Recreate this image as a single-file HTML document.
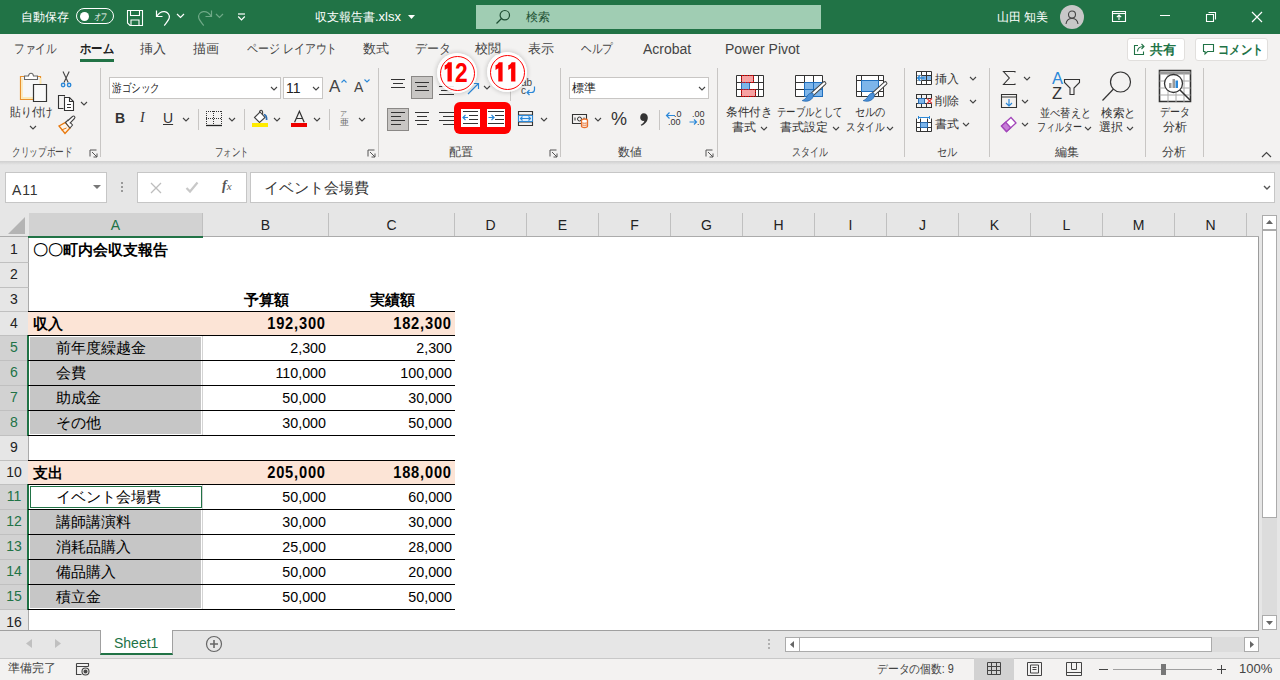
<!DOCTYPE html>
<html lang="ja"><head><meta charset="utf-8">
<style>
*{box-sizing:border-box}
html,body{margin:0;padding:0}
body{width:1280px;height:680px;overflow:hidden;position:relative;background:#f3f2f1;font-family:"Liberation Sans",sans-serif;color:#262626}
.a{position:absolute;white-space:nowrap}
svg{position:absolute;overflow:visible}
#title{left:0;top:0;width:1280px;height:34px;background:#217346}
.wt{color:#fff;font-size:12px;line-height:14px}
.tab{font-size:13px;line-height:16px;color:#444;top:41px}
.gl{font-size:12px;line-height:14px;color:#444;top:145px}
.bt{font-size:12px;line-height:15px;color:#333;text-align:center}
.sep{position:absolute;width:1px;background:#c8c6c4}
.cell{position:absolute;font-size:14.67px;line-height:16px;color:#000}
.rh{position:absolute;left:0;width:28px;background:#e6e6e6;border-bottom:1px solid #c8c8c8;text-align:center;font-size:14px;color:#222}
.ch{position:absolute;top:213px;height:24px;background:#e6e6e6;border-right:1px solid #c8c8c8;border-bottom:1px solid #aaa;text-align:center;font-size:14px;line-height:23px;color:#222}
</style></head><body>
<!-- TITLE BAR -->
<div id="title" class="a"></div>
<div class="a wt" style="left:21px;top:10px;font-size:12px">自動保存</div>
<div class="a" style="left:76px;top:8px;width:38px;height:16px;border:1.3px solid #fff;border-radius:8px"></div>
<div class="a" style="left:79.5px;top:11.5px;width:9px;height:9px;border-radius:50%;background:#fff"></div>
<div class="a wt" style="left:95px;top:10px;font-size:10px;transform:scaleX(.65) skewX(-12deg);transform-origin:0 0">オフ</div>
<svg style="left:126px;top:9px" width="18" height="18" viewBox="0 0 18 18" fill="none" stroke="#fff" stroke-width="1.1"><path d="M1.5 1.5h15v15h-12.5l-2.5-2.5z"/><path d="M4.5 1.5v5h9v-5"/><path d="M5 16.5v-5.5h8v5.5"/></svg>
<svg style="left:155px;top:9px" width="18" height="18" viewBox="0 0 18 18" fill="none" stroke="#fff" stroke-width="1.2"><path d="M1.5 1.5v6h6"/><path d="M1.8 7.2c2-3 5-5 8-4.5c3 .5 5 3 4.5 6c-.3 2-2 4-5 8"/></svg>
<svg style="left:176px;top:13px" width="9" height="6" viewBox="0 0 9 6" fill="none" stroke="#fff" stroke-width="1.2"><path d="M1 1l3.5 3.5l3.5-3.5"/></svg>
<svg style="left:195px;top:9px" width="18" height="18" viewBox="0 0 18 18" fill="none" stroke="#6fa987" stroke-width="1.2"><path d="M16.5 1.5v6h-6"/><path d="M16.2 7.2c-2-3-5-5-8-4.5c-3 .5-5 3-4.5 6c.3 2 2 4 5 8"/></svg>
<svg style="left:215px;top:13px" width="9" height="6" viewBox="0 0 9 6" fill="none" stroke="#6fa987" stroke-width="1.2"><path d="M1 1l3.5 3.5l3.5-3.5"/></svg>
<svg style="left:237px;top:13px" width="9" height="8" viewBox="0 0 9 8" fill="none" stroke="#fff" stroke-width="1.2"><path d="M1 1h7"/><path d="M1.2 3.5l3.3 3.3l3.3-3.3"/></svg>
<div class="a wt" style="left:315px;top:10px;font-size:12px;">収支報告書<span style="font-size:13px">.xlsx</span></div>
<svg style="left:408px;top:15px" width="7" height="4" viewBox="0 0 7 4"><path d="M0 0h7l-3.5 4z" fill="#fff"/></svg>
<div class="a" style="left:476px;top:5px;width:345px;height:24px;background:#a0cdb3"></div>
<svg style="left:495px;top:9px" width="16" height="16" viewBox="0 0 16 16" fill="none" stroke="#1e4d32" stroke-width="1.2"><circle cx="9.8" cy="6.2" r="4.7"/><path d="M6.5 9.5l-5 5"/></svg>
<div class="a" style="left:526px;top:10px;font-size:12px;line-height:14px;color:#1e5234">検索</div>
<div class="a wt" style="left:997px;top:10px;font-size:12px">山田 知美</div>
<div class="a" style="left:1060px;top:5px;width:24px;height:24px;border-radius:50%;background:#c8c8c8"></div>
<svg style="left:1063px;top:8px" width="18" height="18" viewBox="0 0 18 18" fill="none" stroke="#444" stroke-width="1.1"><circle cx="9" cy="6.5" r="3.5"/><path d="M3 16c.5-3.5 3-5.5 6-5.5s5.5 2 6 5.5"/></svg>
<svg style="left:1111px;top:10px" width="16" height="13" viewBox="0 0 16 13" fill="none" stroke="#fff" stroke-width="1.1"><path d="M1.5 1.5h13v10h-13z"/><path d="M1.5 3.5h13"/><path d="M8 10v-5M5.8 7.2l2.2-2.2l2.2 2.2"/></svg>
<svg style="left:1159px;top:15px" width="12" height="2" viewBox="0 0 12 2"><path d="M1 .5h10" stroke="#fff" stroke-width="1"/></svg>
<svg style="left:1205px;top:11px" width="12" height="12" viewBox="0 0 12 12" fill="none" stroke="#fff" stroke-width="1.1"><path d="M1.5 3.5h7v7h-7z"/><path d="M3.5 1.5h7v7"/></svg>
<svg style="left:1251px;top:11px" width="12" height="12" viewBox="0 0 12 12" fill="none" stroke="#fff" stroke-width="1.2"><path d="M1 1l10 10M11 1l-10 10"/></svg>
<!-- TABS -->
<div class="a tab" style="left:14px;transform:scaleX(.82);transform-origin:0 0">ファイル</div>
<div class="a tab" style="left:80px;color:#222;font-weight:bold;transform:scaleX(.87);transform-origin:0 0">ホーム</div>
<div class="a" style="left:80px;top:59px;width:34px;height:3px;background:#217346"></div>
<div class="a tab" style="left:140px">挿入</div>
<div class="a tab" style="left:193px">描画</div>
<div class="a tab" style="left:247px;transform:scaleX(.84);transform-origin:0 0">ページ レイアウト</div>
<div class="a tab" style="left:363px">数式</div>
<div class="a tab" style="left:415px;transform:scaleX(.92);transform-origin:0 0">データ</div>
<div class="a tab" style="left:475px">校閲</div>
<div class="a tab" style="left:528px">表示</div>
<div class="a tab" style="left:581px;transform:scaleX(.82);transform-origin:0 0">ヘルプ</div>
<div class="a tab" style="left:643px;font-size:14px">Acrobat</div>
<div class="a tab" style="left:725px;font-size:14px">Power Pivot</div>
<div class="a" style="left:1127px;top:38px;width:58px;height:23px;background:#fff;border:1px solid #e1dfdd;border-radius:3px"></div>
<svg style="left:1133px;top:42px" width="13" height="14" viewBox="0 0 13 14" fill="none" stroke="#217346" stroke-width="1.1"><path d="M5 3.5h-3.5v9h9v-3"/><path d="M4.5 9.5c0-3 2-5 6-5M8.5 2l2.5 2.5l-2.5 2.5"/></svg>
<div class="a" style="left:1150px;top:42px;font-size:13px;line-height:15px;font-weight:bold;color:#217346">共有</div>
<div class="a" style="left:1195px;top:38px;width:73px;height:23px;background:#fff;border:1px solid #e1dfdd;border-radius:3px"></div>
<svg style="left:1202px;top:43px" width="13" height="13" viewBox="0 0 13 13" fill="none" stroke="#217346" stroke-width="1.1"><path d="M1.5 1.5h10v7h-6l-2.5 2.5v-2.5h-1.5z"/></svg>
<div class="a" style="left:1218px;top:42px;font-size:13px;line-height:15px;font-weight:bold;color:#217346;transform:scaleX(.87);transform-origin:0 0">コメント</div>
<!-- RIBBON -->
<div class="sep" style="left:100px;top:68px;height:89px"></div>
<div class="sep" style="left:378px;top:68px;height:89px"></div>
<div class="sep" style="left:560px;top:68px;height:89px"></div>
<div class="sep" style="left:717px;top:68px;height:89px"></div>
<div class="sep" style="left:904px;top:68px;height:89px"></div>
<div class="sep" style="left:989px;top:68px;height:89px"></div>
<div class="sep" style="left:1145px;top:68px;height:89px"></div>
<div class="sep" style="left:1203px;top:68px;height:89px"></div>
<!-- clipboard -->
<svg style="left:0;top:0" width="1" height="1"><path d="M20.5 76.5h20v23h-20z" fill="#f7f7f7" stroke="#e8912d" stroke-width="1.2"/><path d="M22 78v20h18.5V78" fill="none" stroke="#fde7a8" stroke-width="1.3"/><path d="M24.5 79.5v-3.5h4c.3-1.8 1.2-2.8 2.5-2.8s2.2 1 2.5 2.8h4v3.5z" fill="#fff" stroke="#666" stroke-width="1.1"/><path d="M33.5 84.5h13v17h-13z" fill="#f9f9f9" stroke="#333" stroke-width="1.2"/></svg>
<div class="a bt" style="left:10px;top:105px;transform:scaleX(.9);transform-origin:0 0">貼り付け</div>
<svg style="left:29px;top:125px" width="8" height="5" viewBox="0 0 8 5" fill="none" stroke="#444" stroke-width="1.1"><path d="M1 1l3 3l3-3"/></svg>
<svg style="left:0;top:0" width="1" height="1" fill="none"><path d="M63 71.5l5.2 11M69.2 71.5l-5.2 11" stroke="#444" stroke-width="1.1"/><circle cx="63.1" cy="85" r="1.7" stroke="#2b88d8" stroke-width="1.4"/><circle cx="69.1" cy="85" r="1.7" stroke="#2b88d8" stroke-width="1.4"/></svg>
<svg style="left:0;top:0" width="1" height="1" fill="none" stroke="#333" stroke-width="1.1"><path d="M64.5 96.5v-1h-6v13h5"/><path d="M64.5 97.5h5l4 4v9h-9z" fill="#fff"/><path d="M69.5 97.5v4h4"/><path d="M67 104.5h4M67 107.5h4" stroke-width="1"/></svg>
<svg style="left:80px;top:101px" width="8" height="5" viewBox="0 0 8 5" fill="none" stroke="#444" stroke-width="1.1"><path d="M1 1l3 3l3-3"/></svg>
<svg style="left:0;top:0" width="1" height="1" fill="none"><path d="M59 126l6.5-3.5l4.5 5.5l-5 5.5z" fill="#fdf3e6" stroke="#e8780d" stroke-width="1.4"/><path d="M61.5 130l5-2" stroke="#e8780d" stroke-width="1"/><path d="M65.5 122.5l2.5-2.5l4.5 5l-2.5 3z" fill="#fff" stroke="#444" stroke-width="1.1"/><path d="M67.5 121l5-4.5c.7-.6 1.6-.6 2.1 0c.5.6.4 1.4-.2 2l-4.6 4.8" fill="#fff" stroke="#444" stroke-width="1.1"/></svg>
<div class="a gl" style="left:12px;transform:scaleX(.72);transform-origin:0 0">クリップボード</div>
<svg style="left:89px;top:149px" width="9" height="9" viewBox="0 0 9 9" fill="none" stroke="#555" stroke-width="1"><path d="M1 7.5v-6.5h6.5"/><path d="M3 3l5 5M8 4.5v3.5h-3.5"/></svg>
<!-- font -->
<div class="a" style="left:109px;top:77px;width:172px;height:22px;background:#fff;border:1px solid #c8c6c4"></div>
<div class="a" style="left:112px;top:81px;font-size:12px;line-height:14px;color:#222;transform:scaleX(.8);transform-origin:0 0">游ゴシック</div>
<svg style="left:270px;top:86px" width="8" height="5" viewBox="0 0 8 5" fill="none" stroke="#444" stroke-width="1.1"><path d="M1 1l3 3l3-3"/></svg>
<div class="a" style="left:283px;top:77px;width:40px;height:22px;background:#fff;border:1px solid #c8c6c4"></div>
<div class="a" style="left:286px;top:80px;font-size:14px;line-height:16px;color:#222">11</div>
<svg style="left:312px;top:86px" width="8" height="5" viewBox="0 0 8 5" fill="none" stroke="#444" stroke-width="1.1"><path d="M1 1l3 3l3-3"/></svg>
<div class="a" style="left:329px;top:78px;font-size:17px;line-height:17px;color:#444">A</div>
<svg style="left:341px;top:79px" width="6" height="4" viewBox="0 0 6 4" fill="none" stroke="#2b88d8" stroke-width="1.1"><path d="M.5 3.5l2.5-2.5l2.5 2.5"/></svg>
<div class="a" style="left:354px;top:80px;font-size:14px;line-height:14px;color:#444">A</div>
<svg style="left:364px;top:79px" width="6" height="4" viewBox="0 0 6 4" fill="none" stroke="#2b88d8" stroke-width="1.1"><path d="M.5 .5l2.5 2.5l2.5-2.5"/></svg>
<div class="a" style="left:115px;top:110px;font-size:14px;line-height:16px;font-weight:bold;color:#333">B</div>
<div class="a" style="left:140px;top:110px;font-size:14px;line-height:16px;font-style:italic;font-family:'Liberation Serif',serif;color:#333">I</div>
<div class="a" style="left:163px;top:110px;font-size:14px;line-height:16px;color:#333;text-decoration:underline">U</div>
<svg style="left:182px;top:117px" width="8" height="5" viewBox="0 0 8 5" fill="none" stroke="#444" stroke-width="1.1"><path d="M1 1l3 3l3-3"/></svg>
<div class="sep" style="left:198px;top:109px;height:21px"></div>
<svg style="left:0;top:0" width="1" height="1" fill="none"><path d="M206 111.5h16M206 118.5h16M206.5 111v14M213.5 111v14M221.5 111v14" stroke="#333" stroke-width="1" stroke-dasharray="1 1"/><path d="M206 125.5h16" stroke="#222" stroke-width="1.3"/></svg>
<svg style="left:228px;top:117px" width="8" height="5" viewBox="0 0 8 5" fill="none" stroke="#444" stroke-width="1.1"><path d="M1 1l3 3l3-3"/></svg>
<div class="sep" style="left:244px;top:109px;height:21px"></div>
<svg style="left:0;top:0" width="1" height="1" fill="none"><path d="M254.5 117.5l5.5-5.5l5 5.5l-5.5 5z" fill="#fff" stroke="#444" stroke-width="1.1"/><path d="M259.5 112.5c0-1.5.8-2.3 1.6-2.3s1.5.8 1.5 2.2v2.6" stroke="#444" stroke-width="1.1"/><path d="M264 114.5c1.8.5 2.8 2.5 2.6 5.5" stroke="#2b6cb0" stroke-width="1.7"/><path d="M252 123h16v4h-16z" fill="#ffeb00"/></svg>
<svg style="left:273px;top:117px" width="8" height="5" viewBox="0 0 8 5" fill="none" stroke="#444" stroke-width="1.1"><path d="M1 1l3 3l3-3"/></svg>
<svg style="left:0;top:0" width="1" height="1" fill="none"><path d="M294.6 122.2L299.4 111.2L304.2 122.2M296.4 118.5h6" stroke="#333" stroke-width="1.2"/></svg>
<div class="a" style="left:291px;top:123px;width:16px;height:4px;background:#e00"></div>
<svg style="left:313px;top:117px" width="8" height="5" viewBox="0 0 8 5" fill="none" stroke="#444" stroke-width="1.1"><path d="M1 1l3 3l3-3"/></svg>
<div class="sep" style="left:329px;top:109px;height:21px"></div>
<div class="a" style="left:340px;top:110px;font-size:7px;line-height:7px;color:#666">ア</div>
<div class="a" style="left:340px;top:118px;font-size:9px;line-height:9px;color:#666">亜</div>
<svg style="left:358px;top:117px" width="8" height="5" viewBox="0 0 8 5" fill="none" stroke="#444" stroke-width="1.1"><path d="M1 1l3 3l3-3"/></svg>
<div class="a gl" style="left:215px;transform:scaleX(.7);transform-origin:0 0">フォント</div>
<svg style="left:367px;top:149px" width="9" height="9" viewBox="0 0 9 9" fill="none" stroke="#555" stroke-width="1"><path d="M1 7.5v-6.5h6.5"/><path d="M3 3l5 5M8 4.5v3.5h-3.5"/></svg>
<!-- alignment -->
<svg style="left:390px;top:78px" width="16" height="11" viewBox="0 0 16 11" stroke="#333" stroke-width="1"><path d="M1 1.5h14M3 5.5h10M1 9.5h14"/></svg>
<div class="a" style="left:411px;top:76px;width:22px;height:23px;background:#c8c6c4;border:1px solid #8a8886"></div>
<svg style="left:414px;top:81px" width="16" height="11" viewBox="0 0 16 11" stroke="#333" stroke-width="1"><path d="M1 1.5h14M3 5.5h10M1 9.5h14"/></svg>
<svg style="left:438px;top:84px" width="17" height="11" viewBox="0 0 17 11" stroke="#333" stroke-width="1"><path d="M1 2.5h15M3 6.5h11M1 10.5h15"/></svg>
<svg style="left:467px;top:82px" width="13" height="13" viewBox="0 0 13 13" fill="none" stroke="#2b88d8" stroke-width="1.2"><path d="M1 12l10.5-10.5M6 1.5h5.5v5.5"/></svg>
<svg style="left:483px;top:85px" width="8" height="5" viewBox="0 0 8 5" fill="none" stroke="#444" stroke-width="1.1"><path d="M1 1l3 3l3-3"/></svg>
<div class="sep" style="left:510px;top:71px;height:30px"></div>
<div class="a" style="left:521px;top:79px;font-size:10px;line-height:8px;color:#444">ab</div>
<div class="a" style="left:521px;top:87px;font-size:10px;line-height:8px;color:#444">c</div>
<svg style="left:526px;top:86px" width="10" height="9" viewBox="0 0 10 9" fill="none" stroke="#2b88d8" stroke-width="1.2"><path d="M8.5 .5v3c0 2-1 3-3 3h-4M3.5 4l-2.5 2.5l2.5 2.5"/></svg>
<div class="a" style="left:387px;top:108px;width:22px;height:23px;background:#c8c6c4;border:1px solid #8a8886"></div>
<svg style="left:390px;top:112px" width="16" height="15" viewBox="0 0 16 15" stroke="#333" stroke-width="1"><path d="M1 .5h14M1 4.5h10M1 8.5h14M1 12.5h10"/></svg>
<svg style="left:414px;top:112px" width="16" height="15" viewBox="0 0 16 15" stroke="#333" stroke-width="1"><path d="M1 .5h14M3 4.5h10M1 8.5h14M3 12.5h10"/></svg>
<svg style="left:438px;top:112px" width="17" height="15" viewBox="0 0 17 15" stroke="#333" stroke-width="1"><path d="M1 .5h15M5 4.5h11M1 8.5h15M5 12.5h11"/></svg>
<div class="a" style="left:454px;top:102px;width:57px;height:32px;background:#f00;border-radius:6px"></div>
<div class="a" style="left:461px;top:109px;width:19px;height:18px;background:#fff"></div>
<div class="a" style="left:487px;top:109px;width:18px;height:18px;background:#fff"></div>
<svg style="left:461px;top:109px" width="19" height="18" viewBox="0 0 19 18" fill="none"><path d="M2 2.5h15M8 6.5h9M8 10.5h9M2 14.5h15" stroke="#333" stroke-width="1"/><path d="M7 8.5h-5M4.5 6l-2.5 2.5l2.5 2.5" stroke="#2b88d8" stroke-width="1.2"/></svg>
<svg style="left:487px;top:109px" width="18" height="18" viewBox="0 0 18 18" fill="none"><path d="M1 2.5h16M8 6.5h9M8 10.5h9M1 14.5h16" stroke="#333" stroke-width="1"/><path d="M1.5 8.5h5M4.5 6l2.5 2.5l-2.5 2.5" stroke="#2b88d8" stroke-width="1.2"/></svg>
<svg style="left:517px;top:110px" width="17" height="17" viewBox="0 0 17 17" fill="none"><path d="M1.5 1.5h14v14h-14z" stroke="#333" stroke-width="1.1"/><path d="M1.5 5h14M1.5 12h14" stroke="#333" stroke-width="1"/><path d="M1.5 5.5h14v6h-14z" fill="#dbeeff" stroke="#2b88d8" stroke-width="1"/><path d="M3.5 8.5h10M5.5 6.5l-2 2l2 2M11.5 6.5l2 2l-2 2" stroke="#2b88d8" stroke-width="1.1"/></svg>
<svg style="left:540px;top:117px" width="8" height="5" viewBox="0 0 8 5" fill="none" stroke="#444" stroke-width="1.1"><path d="M1 1l3 3l3-3"/></svg>
<div class="a gl" style="left:449px">配置</div>
<svg style="left:549px;top:149px" width="9" height="9" viewBox="0 0 9 9" fill="none" stroke="#555" stroke-width="1"><path d="M1 7.5v-6.5h6.5"/><path d="M3 3l5 5M8 4.5v3.5h-3.5"/></svg>
<!-- number -->
<div class="a" style="left:569px;top:77px;width:140px;height:22px;background:#fff;border:1px solid #c8c6c4"></div>
<div class="a" style="left:572px;top:81px;font-size:12px;line-height:14px;color:#222">標準</div>
<svg style="left:698px;top:86px" width="8" height="5" viewBox="0 0 8 5" fill="none" stroke="#444" stroke-width="1.1"><path d="M1 1l3 3l3-3"/></svg>
<svg style="left:571px;top:112px" width="19" height="16" viewBox="0 0 19 16" fill="none"><path d="M1.5 2.5h14v9h-14z" stroke="#333" stroke-width="1.1"/><path d="M4 5.5v3M13 5.5v3" stroke="#333" stroke-width="1"/><circle cx="8.5" cy="7" r="2" stroke="#333" stroke-width="1"/><path d="M10.5 8.5c0-1 1.5-1.5 3-1.5s3 .5 3 1.5v5.5c0 1-1.5 1.5-3 1.5s-3-.5-3-1.5z" fill="#fff" stroke="#e8712d" stroke-width="1.3"/><path d="M10.5 10.5c.5 1 5.5 1 6 0M10.5 12.5c.5 1 5.5 1 6 0" stroke="#e8712d" stroke-width="1"/></svg>
<svg style="left:594px;top:117px" width="8" height="5" viewBox="0 0 8 5" fill="none" stroke="#444" stroke-width="1.1"><path d="M1 1l3 3l3-3"/></svg>
<div class="a" style="left:611px;top:109px;font-size:18px;line-height:20px;color:#333">%</div>
<svg style="left:639px;top:113px" width="9" height="13" viewBox="0 0 9 13"><path d="M4.6 .3c2.5 0 4.2 1.8 4.2 4.3c0 3.8-2.8 7-6.5 8.2l-.6-1c2-1 3.3-2.3 3.7-4c-.3.1-.6.1-.9.1c-1.9 0-3.3-1.4-3.3-3.5s1.4-4.1 3.4-4.1z" fill="#333"/></svg>
<div class="sep" style="left:659px;top:110px;height:20px"></div>
<svg style="left:665px;top:111px" width="18" height="16" viewBox="0 0 18 16" fill="none"><path d="M10 4.5h-8.5M4.5 1.5l-3 3l3 3" stroke="#2b88d8" stroke-width="1.2"/></svg>
<div class="a" style="left:674px;top:110px;font-size:9px;line-height:9px;color:#333">.0</div>
<div class="a" style="left:668px;top:118px;font-size:9px;line-height:9px;color:#333">.00</div>
<div class="a" style="left:692px;top:110px;font-size:9px;line-height:9px;color:#333">.00</div>
<div class="a" style="left:697px;top:118px;font-size:9px;line-height:9px;color:#333">.0</div>
<svg style="left:689px;top:118px" width="10" height="8" viewBox="0 0 10 8" fill="none"><path d="M.5 4h7M5 1.5l2.5 2.5l-2.5 2.5" stroke="#2b88d8" stroke-width="1.2"/></svg>
<div class="a gl" style="left:618px">数値</div>
<svg style="left:705px;top:149px" width="9" height="9" viewBox="0 0 9 9" fill="none" stroke="#555" stroke-width="1"><path d="M1 7.5v-6.5h6.5"/><path d="M3 3l5 5M8 4.5v3.5h-3.5"/></svg>
<!-- styles -->
<svg style="left:0;top:0" width="1" height="1" fill="none"><path d="M736.5 75.5h27v21h-27z" fill="#fff"/><path d="M741.5 75.5h12v7h-12zM741.5 89.5h14v7h-14z" fill="#f7a1a1"/><path d="M741.5 82.5h8v7h-8z" fill="#7db5ea"/><path d="M736.5 75.5h27v21h-27zM736.5 82.5h27M736.5 89.5h27M741.5 75.5v21M753.5 75.5v7M755.5 89.5v7M758.5 75.5v21" stroke="#333" stroke-width="1"/><path d="M741.5 82.5h8v7h-8z" stroke="#2b6cb0" stroke-width="1"/><path d="M741.5 75.5h12v7h-12zM741.5 89.5h14v7h-14z" stroke="#e00" stroke-width="1" stroke-dasharray="1.5 1"/></svg>
<div class="a bt" style="left:726px;top:105px;transform:scaleX(.97);transform-origin:0 0">条件付き</div>
<div class="a bt" style="left:732px;top:120px">書式</div>
<svg style="left:760px;top:126px" width="8" height="5" viewBox="0 0 8 5" fill="none" stroke="#444" stroke-width="1.1"><path d="M1 1l3 3l3-3"/></svg>
<svg style="left:0;top:0" width="1" height="1" fill="none"><path d="M795.5 75.5h27v21h-27z" fill="#fff"/><path d="M804.5 82.5h18v14h-18z" fill="#7db5ea"/><path d="M795.5 75.5h27v21h-27zM795.5 82.5h27M795.5 89.5h27M804.5 75.5v21M813.5 75.5v21" stroke="#333" stroke-width="1"/><path d="M804.5 96.5v-14h18v14zM804.5 89.5h18M813.5 82.5v14" stroke="#1f6fbf" stroke-width="1"/><path d="M824.3 83.3l-12.1 11.1" stroke="#444" stroke-width="4.2" stroke-linecap="round"/><path d="M824.3 83.3l-12.1 11.1" stroke="#fff" stroke-width="2.2" stroke-linecap="round"/><path d="M813 93.2c-2.8-.6-5 .8-6.3 3.6c-.8 1.6-2.2 3-4.5 3.8c2.8 1.2 6.5.8 9-1.2c1.8-1.5 2.6-3.6 1.8-6.2z" fill="#4a90d9" stroke="#2b6cb0" stroke-width=".8"/></svg>
<div class="a bt" style="left:777px;top:105px;transform:scaleX(.78);transform-origin:0 0">テーブルとして</div>
<div class="a bt" style="left:780px;top:120px">書式設定</div>
<svg style="left:832px;top:126px" width="8" height="5" viewBox="0 0 8 5" fill="none" stroke="#444" stroke-width="1.1"><path d="M1 1l3 3l3-3"/></svg>
<svg style="left:0;top:0" width="1" height="1" fill="none"><path d="M856.5 75.5h27v21h-27z" fill="#fff"/><path d="M856.5 80.5h27M856.5 91.5h27M861.5 75.5v21M878.5 75.5v21" stroke="#333" stroke-width="1"/><path d="M861.5 80.5h17v11h-17z" fill="#7db5ea" stroke="#1f6fbf" stroke-width="1"/><path d="M856.5 75.5h27v21h-27z" stroke="#333" stroke-width="1"/><path d="M885.3 83.3l-12.1 11.1" stroke="#444" stroke-width="4.2" stroke-linecap="round"/><path d="M885.3 83.3l-12.1 11.1" stroke="#fff" stroke-width="2.2" stroke-linecap="round"/><path d="M874 93.2c-2.8-.6-5 .8-6.3 3.6c-.8 1.6-2.2 3-4.5 3.8c2.8 1.2 6.5.8 9-1.2c1.8-1.5 2.6-3.6 1.8-6.2z" fill="#4a90d9" stroke="#2b6cb0" stroke-width=".8"/></svg>
<div class="a bt" style="left:855px;top:105px;transform:scaleX(.85);transform-origin:0 0">セルの</div>
<div class="a bt" style="left:846px;top:120px;transform:scaleX(.8);transform-origin:0 0">スタイル</div>
<svg style="left:886px;top:126px" width="8" height="5" viewBox="0 0 8 5" fill="none" stroke="#444" stroke-width="1.1"><path d="M1 1l3 3l3-3"/></svg>
<div class="a gl" style="left:792px;transform:scaleX(.75);transform-origin:0 0">スタイル</div>
<!-- cells -->
<svg style="left:0;top:0" width="1" height="1" fill="none"><path d="M916 71h16v14h-16z" fill="#fff"/><path d="M922 76h10v4h-10z" fill="#7db5ea"/><path d="M916.5 71.5h15v13h-15zM916.5 75.5h15M916.5 80.5h15M921.5 71.5v13M926.5 71.5v13" stroke="#333" stroke-width="1"/><path d="M916.5 75.5h5v5h-5z" fill="#fff"/><path d="M924.5 78h-7M920.3 75.3l-2.7 2.7l2.7 2.7" stroke="#2b88d8" stroke-width="1.3"/><path d="M916.5 71.5v13" stroke="#333" stroke-width="1"/></svg>
<div class="a bt" style="left:935px;top:72px">挿入</div>
<svg style="left:969px;top:76px" width="8" height="5" viewBox="0 0 8 5" fill="none" stroke="#444" stroke-width="1.1"><path d="M1 1l3 3l3-3"/></svg>
<svg style="left:0;top:0" width="1" height="1" fill="none"><path d="M916 94.5h16M916 98.5h16M916 103.5h16M916 107.5h16M916.5 94.5v3.5M916.5 104v3.5M921.5 94.5v13M926.5 94.5v4M926.5 103v4.5M931.5 94.5v13" stroke="#333" stroke-width="1"/><path d="M926 99h6v4h-6z" fill="#f3f2f1"/><path d="M918.5 98.5h6v5h-6z" fill="#7db5ea" stroke="#2b6cb0" stroke-width="1"/><path d="M927 98.5l5 5M932 98.5l-5 5" stroke="#e44" stroke-width="1.1"/></svg>
<div class="a bt" style="left:935px;top:94px">削除</div>
<svg style="left:969px;top:99px" width="8" height="5" viewBox="0 0 8 5" fill="none" stroke="#444" stroke-width="1.1"><path d="M1 1l3 3l3-3"/></svg>
<svg style="left:0;top:0" width="1" height="1" fill="none"><path d="M916 118h16v14h-16z" fill="#fff"/><path d="M920.5 122.5h7v5h-7z" fill="#7db5ea"/><path d="M916.5 118.5v13h15v-13M916.5 122.5h15M916.5 127.5h15M920.5 118.5v13M927.5 118.5v13" stroke="#333" stroke-width="1"/><path d="M920.5 122.5h7v5h-7z" stroke="#2b6cb0" stroke-width="1"/><path d="M919 117.5h10M918.5 116v3M929.5 116v3" stroke="#2b88d8" stroke-width="1"/></svg>
<div class="a bt" style="left:935px;top:117px">書式</div>
<svg style="left:962px;top:122px" width="8" height="5" viewBox="0 0 8 5" fill="none" stroke="#444" stroke-width="1.1"><path d="M1 1l3 3l3-3"/></svg>
<div class="a gl" style="left:937px;transform:scaleX(.85);transform-origin:0 0">セル</div>
<!-- editing -->
<svg style="left:1002px;top:70px" width="16" height="16" viewBox="0 0 16 16" fill="none" stroke="#333" stroke-width="1.1"><path d="M13 2.5v-1h-11.5l5.8 6.5l-5.8 6.5h11.5v-1"/></svg>
<svg style="left:1023px;top:76px" width="8" height="5" viewBox="0 0 8 5" fill="none" stroke="#444" stroke-width="1.1"><path d="M1 1l3 3l3-3"/></svg>
<svg style="left:1000px;top:93px" width="18" height="16" viewBox="0 0 18 16" fill="none"><path d="M1.5 1.5h15v13h-15zM1.5 4h15" stroke="#333" stroke-width="1.1"/><path d="M9 6v7M6 10l3 3l3-3" stroke="#2b88d8" stroke-width="1.2"/></svg>
<svg style="left:1021px;top:99px" width="8" height="5" viewBox="0 0 8 5" fill="none" stroke="#444" stroke-width="1.1"><path d="M1 1l3 3l3-3"/></svg>
<svg style="left:1000px;top:115px" width="18" height="18" viewBox="0 0 18 18" fill="none"><path d="M1.5 11l9.5-8.5l5 5.5l-9.5 8.5z" fill="#fff" stroke="#a347ba" stroke-width="1.3"/><path d="M1.5 11l4.2-3.8l5 5.5l-4.2 3.8z" fill="#c77ed8" stroke="#a347ba" stroke-width="1.3"/></svg>
<svg style="left:1021px;top:122px" width="8" height="5" viewBox="0 0 8 5" fill="none" stroke="#444" stroke-width="1.1"><path d="M1 1l3 3l3-3"/></svg>
<div class="a" style="left:1052px;top:70px;font-size:16.5px;line-height:16px;color:#2b88d8">A</div>
<div class="a" style="left:1052px;top:85px;font-size:16.5px;line-height:16px;color:#333">Z</div>
<svg style="left:0;top:0" width="1" height="1" fill="none" stroke="#333" stroke-width="1.1"><path d="M1064.5 79.5h15v3l-5.5 5.5v6.5h-4v-6.5l-5.5-5.5z"/></svg>
<div class="a bt" style="left:1040px;top:106px;transform:scaleX(.85);transform-origin:0 0">並べ替えと</div>
<div class="a bt" style="left:1037px;top:120px;transform:scaleX(.75);transform-origin:0 0">フィルター</div>
<svg style="left:1084px;top:126px" width="8" height="5" viewBox="0 0 8 5" fill="none" stroke="#444" stroke-width="1.1"><path d="M1 1l3 3l3-3"/></svg>
<svg style="left:1101px;top:71px" width="31" height="31" viewBox="0 0 31 31" fill="none" stroke="#333" stroke-width="1.2"><circle cx="19.5" cy="11" r="10"/><path d="M12.5 18l-11 11.5"/></svg>
<div class="a bt" style="left:1101px;top:106px;transform:scaleX(.97);transform-origin:0 0">検索と</div>
<div class="a bt" style="left:1099px;top:120px">選択</div>
<svg style="left:1126px;top:126px" width="8" height="5" viewBox="0 0 8 5" fill="none" stroke="#444" stroke-width="1.1"><path d="M1 1l3 3l3-3"/></svg>
<div class="a gl" style="left:1055px">編集</div>
<!-- analysis -->
<svg style="left:1158px;top:69px" width="34" height="34" viewBox="0 0 34 34" fill="none"><path d="M1.5 1.5h31v31h-31z" fill="#fff" stroke="#333" stroke-width="1.6"/><path d="M1.5 4h31" stroke="#999" stroke-width="3"/><path d="M1.5 12h31M1.5 19h31M1.5 26h31M10 4v29M18 4v29M26 4v29" stroke="#aaa" stroke-width="1"/><circle cx="15.5" cy="14.5" r="9" fill="#fff" stroke="#333" stroke-width="1.3"/><path d="M22 21l10 10" stroke="#333" stroke-width="1.5"/><path d="M11 14h2.5v5h-2.5zM14.5 10h2.5v9h-2.5z" fill="#999"/><path d="M17.5 11.5h2.5v7.5h-2.5z" fill="#2b88d8"/></svg>
<div class="a bt" style="left:1160px;top:105px;transform:scaleX(.83);transform-origin:0 0">データ</div>
<div class="a bt" style="left:1163px;top:120px">分析</div>
<div class="a gl" style="left:1162px">分析</div>
<svg style="left:1261px;top:151px" width="11" height="7" viewBox="0 0 11 7" fill="none" stroke="#444" stroke-width="1.2"><path d="M1 6l4.5-4.5l4.5 4.5"/></svg>
<!-- callouts -->
<div class="a" style="left:437px;top:53px;width:40px;height:40px;border-radius:50%;background:rgba(255,255,255,.9);box-shadow:0 0 4px 1px rgba(0,0,0,.16)"></div>
<div class="a" style="left:439.5px;top:55.5px;width:35px;height:35px;border-radius:50%;border:1px solid #f00"></div>
<svg style="left:0;top:0" width="1" height="1"><path d="M451.8 62.2V81.6H447.5V68.2L444.7 70V65.3C446.5 64.4 447.5 63.4 448.1 62.2Z" fill="#f00"/></svg><div class="a" style="left:455px;top:58px;font-size:28.5px;line-height:28px;font-weight:bold;color:#f00;transform:scaleX(.8);transform-origin:0 0">2</div>
<div class="a" style="left:487px;top:52px;width:40px;height:40px;border-radius:50%;background:rgba(255,255,255,.9);box-shadow:0 0 4px 1px rgba(0,0,0,.16)"></div>
<div class="a" style="left:489.5px;top:54.5px;width:35px;height:35px;border-radius:50%;border:1px solid #f00"></div>
<svg style="left:0;top:0" width="1" height="1"><path d="M502.6 62.2V81.6H498.3V68.2L495.5 70V65.3C497.3 64.4 498.3 63.4 498.90000000000003 62.2ZM515.4 62.2V81.6H511.1V68.2L508.3 70V65.3C510.1 64.4 511.1 63.4 511.70000000000005 62.2Z" fill="#f00"/></svg>

<!-- FORMULA -->
<div class="a" style="left:0;top:161px;width:1280px;height:469px;background:#e6e6e6"></div>
<div class="a" style="left:0;top:161px;width:1280px;height:4px;background:linear-gradient(#cfcfcf,#e6e6e6)"></div>
<div class="a" style="left:5px;top:172px;width:102px;height:31px;background:#fff;border:1px solid #c6c6c6"></div>
<div class="a" style="left:12px;top:181.5px;font-size:14px;line-height:16px;color:#333;letter-spacing:.8px">A11</div>
<svg style="left:93px;top:185px" width="8" height="4" viewBox="0 0 8 4"><path d="M0 0h8l-4 4z" fill="#777"/></svg>
<svg style="left:121px;top:182px" width="2" height="11" viewBox="0 0 2 11" fill="#999"><rect x="0" y="0" width="2" height="2"/><rect x="0" y="4" width="2" height="2"/><rect x="0" y="8" width="2" height="2"/></svg>
<div class="a" style="left:137px;top:172px;width:110px;height:31px;background:#fff;border:1px solid #c6c6c6"></div>
<svg style="left:150px;top:182px" width="12" height="12" viewBox="0 0 12 12" fill="none" stroke="#bdbdbd" stroke-width="1.3"><path d="M1 1l10 10M11 1l-10 10"/></svg>
<svg style="left:185px;top:181px" width="14" height="12" viewBox="0 0 14 12" fill="none" stroke="#c8c8c8" stroke-width="2.2"><path d="M1.5 7l3.5 3.5l7.5-9"/></svg>
<div class="a" style="left:222px;top:178px;font-size:14px;line-height:16px;font-style:italic;font-weight:bold;font-family:'Liberation Serif',serif;color:#555">f<span style="font-size:11px;font-weight:normal">x</span></div>
<div class="a" style="left:250px;top:172px;width:1025px;height:31px;background:#fff;border:1px solid #c6c6c6"></div>
<div class="a" style="left:264px;top:180px;font-size:14.67px;line-height:16px;color:#333">イベント会場費</div>
<svg style="left:1263px;top:185px" width="8" height="5" viewBox="0 0 8 5" fill="none" stroke="#555" stroke-width="1.4"><path d="M1 1l3 3l3-3"/></svg>
<!-- SHEET -->
<div class="a" style="left:28px;top:237px;width:1231px;height:393px;background:#fff;border-right:1px solid #9b9b9b"></div>
<div class="a" style="left:0;top:213px;width:1259px;height:24px;background:#e6e6e6;border-bottom:1px solid #ababab"></div>
<svg style="left:8px;top:217px" width="17" height="17" viewBox="0 0 17 17"><path d="M17 0v17h-17z" fill="#b4b4b4"/></svg>
<div class="a" style="left:29px;top:213px;width:174px;height:23px;background:#d2d2d2;border-right:1px solid #c0c0c0;text-align:center;font-size:14px;line-height:24px;color:#217346">A</div>
<div class="a" style="left:203px;top:213px;width:126px;height:23px;background:#e6e6e6;border-right:1px solid #c0c0c0;text-align:center;font-size:14px;line-height:24px;color:#222">B</div>
<div class="a" style="left:329px;top:213px;width:126px;height:23px;background:#e6e6e6;border-right:1px solid #c0c0c0;text-align:center;font-size:14px;line-height:24px;color:#222">C</div>
<div class="a" style="left:455px;top:213px;width:72px;height:23px;background:#e6e6e6;border-right:1px solid #c0c0c0;text-align:center;font-size:14px;line-height:24px;color:#222">D</div>
<div class="a" style="left:527px;top:213px;width:72px;height:23px;background:#e6e6e6;border-right:1px solid #c0c0c0;text-align:center;font-size:14px;line-height:24px;color:#222">E</div>
<div class="a" style="left:599px;top:213px;width:72px;height:23px;background:#e6e6e6;border-right:1px solid #c0c0c0;text-align:center;font-size:14px;line-height:24px;color:#222">F</div>
<div class="a" style="left:671px;top:213px;width:72px;height:23px;background:#e6e6e6;border-right:1px solid #c0c0c0;text-align:center;font-size:14px;line-height:24px;color:#222">G</div>
<div class="a" style="left:743px;top:213px;width:72px;height:23px;background:#e6e6e6;border-right:1px solid #c0c0c0;text-align:center;font-size:14px;line-height:24px;color:#222">H</div>
<div class="a" style="left:815px;top:213px;width:72px;height:23px;background:#e6e6e6;border-right:1px solid #c0c0c0;text-align:center;font-size:14px;line-height:24px;color:#222">I</div>
<div class="a" style="left:887px;top:213px;width:72px;height:23px;background:#e6e6e6;border-right:1px solid #c0c0c0;text-align:center;font-size:14px;line-height:24px;color:#222">J</div>
<div class="a" style="left:959px;top:213px;width:72px;height:23px;background:#e6e6e6;border-right:1px solid #c0c0c0;text-align:center;font-size:14px;line-height:24px;color:#222">K</div>
<div class="a" style="left:1031px;top:213px;width:72px;height:23px;background:#e6e6e6;border-right:1px solid #c0c0c0;text-align:center;font-size:14px;line-height:24px;color:#222">L</div>
<div class="a" style="left:1103px;top:213px;width:72px;height:23px;background:#e6e6e6;border-right:1px solid #c0c0c0;text-align:center;font-size:14px;line-height:24px;color:#222">M</div>
<div class="a" style="left:1175px;top:213px;width:72px;height:23px;background:#e6e6e6;border-right:1px solid #c0c0c0;text-align:center;font-size:14px;line-height:24px;color:#222">N</div>
<div class="a" style="left:28px;top:236px;width:175px;height:2px;background:#217346"></div>
<div class="a" style="left:0;top:238px;width:29px;height:25px;background:#e6e6e6;border-bottom:1px solid #c0c0c0;border-right:1px solid #ababab;text-align:center;font-size:14px;line-height:23px;color:#222">1</div>
<div class="a" style="left:0;top:263px;width:29px;height:25px;background:#e6e6e6;border-bottom:1px solid #c0c0c0;border-right:1px solid #ababab;text-align:center;font-size:14px;line-height:23px;color:#222">2</div>
<div class="a" style="left:0;top:288px;width:29px;height:24px;background:#e6e6e6;border-bottom:1px solid #c0c0c0;border-right:1px solid #ababab;text-align:center;font-size:14px;line-height:22px;color:#222">3</div>
<div class="a" style="left:0;top:312px;width:29px;height:24px;background:#e6e6e6;border-bottom:1px solid #c0c0c0;border-right:1px solid #ababab;text-align:center;font-size:14px;line-height:22px;color:#222">4</div>
<div class="a" style="left:0;top:336px;width:29px;height:25px;background:#d2d2d2;border-bottom:1px solid #c0c0c0;border-right:1px solid #ababab;text-align:center;font-size:14px;line-height:23px;color:#217346">5</div>
<div class="a" style="left:0;top:361px;width:29px;height:25px;background:#d2d2d2;border-bottom:1px solid #c0c0c0;border-right:1px solid #ababab;text-align:center;font-size:14px;line-height:23px;color:#217346">6</div>
<div class="a" style="left:0;top:386px;width:29px;height:25px;background:#d2d2d2;border-bottom:1px solid #c0c0c0;border-right:1px solid #ababab;text-align:center;font-size:14px;line-height:23px;color:#217346">7</div>
<div class="a" style="left:0;top:411px;width:29px;height:25px;background:#d2d2d2;border-bottom:1px solid #c0c0c0;border-right:1px solid #ababab;text-align:center;font-size:14px;line-height:23px;color:#217346">8</div>
<div class="a" style="left:0;top:436px;width:29px;height:25px;background:#e6e6e6;border-bottom:1px solid #c0c0c0;border-right:1px solid #ababab;text-align:center;font-size:14px;line-height:23px;color:#222">9</div>
<div class="a" style="left:0;top:461px;width:29px;height:24px;background:#e6e6e6;border-bottom:1px solid #c0c0c0;border-right:1px solid #ababab;text-align:center;font-size:14px;line-height:22px;color:#222">10</div>
<div class="a" style="left:0;top:485px;width:29px;height:25px;background:#d2d2d2;border-bottom:1px solid #c0c0c0;border-right:1px solid #ababab;text-align:center;font-size:14px;line-height:23px;color:#217346">11</div>
<div class="a" style="left:0;top:510px;width:29px;height:25px;background:#d2d2d2;border-bottom:1px solid #c0c0c0;border-right:1px solid #ababab;text-align:center;font-size:14px;line-height:23px;color:#217346">12</div>
<div class="a" style="left:0;top:535px;width:29px;height:25px;background:#d2d2d2;border-bottom:1px solid #c0c0c0;border-right:1px solid #ababab;text-align:center;font-size:14px;line-height:23px;color:#217346">13</div>
<div class="a" style="left:0;top:560px;width:29px;height:25px;background:#d2d2d2;border-bottom:1px solid #c0c0c0;border-right:1px solid #ababab;text-align:center;font-size:14px;line-height:23px;color:#217346">14</div>
<div class="a" style="left:0;top:585px;width:29px;height:25px;background:#d2d2d2;border-bottom:1px solid #c0c0c0;border-right:1px solid #ababab;text-align:center;font-size:14px;line-height:23px;color:#217346">15</div>
<div class="a" style="left:0;top:610px;width:29px;height:21px;background:#e6e6e6;border-bottom:1px solid #c0c0c0;border-right:1px solid #ababab;text-align:center;font-size:14px;line-height:24px;color:#222">16</div>
<div class="a" style="left:27px;top:335px;width:2px;height:101px;background:#217346"></div>
<div class="a" style="left:27px;top:484px;width:2px;height:126px;background:#217346"></div>
<div class="a" style="left:28px;top:311px;width:427px;height:24px;background:#fce4d6"></div>
<div class="a" style="left:28px;top:460px;width:427px;height:24px;background:#fce4d6"></div>
<div class="a" style="left:30px;top:337px;width:171px;height:97px;background:#c6c6c6"></div>
<div class="a" style="left:30px;top:510px;width:171px;height:98px;background:#c6c6c6"></div>
<div class="a" style="left:30px;top:486px;width:172px;height:22px;border:1px solid #217346"></div>
<div class="a" style="left:202px;top:335px;width:1px;height:101px;background:#d4d4d4"></div>
<div class="a" style="left:202px;top:484px;width:1px;height:126px;background:#d4d4d4"></div>
<div class="a" style="left:28px;top:311px;width:427px;height:1px;background:#000"></div>
<div class="a" style="left:28px;top:335px;width:427px;height:1px;background:#000"></div>
<div class="a" style="left:28px;top:360px;width:427px;height:1px;background:#000"></div>
<div class="a" style="left:28px;top:385px;width:427px;height:1px;background:#000"></div>
<div class="a" style="left:28px;top:410px;width:427px;height:1px;background:#000"></div>
<div class="a" style="left:28px;top:435px;width:427px;height:1px;background:#000"></div>
<div class="a" style="left:28px;top:460px;width:427px;height:1px;background:#000"></div>
<div class="a" style="left:28px;top:484px;width:427px;height:1px;background:#000"></div>
<div class="a" style="left:28px;top:509px;width:427px;height:1px;background:#000"></div>
<div class="a" style="left:28px;top:534px;width:427px;height:1px;background:#000"></div>
<div class="a" style="left:28px;top:559px;width:427px;height:1px;background:#000"></div>
<div class="a" style="left:28px;top:584px;width:427px;height:1px;background:#000"></div>
<div class="a" style="left:28px;top:609px;width:427px;height:1px;background:#000"></div>
<div class="cell" style="left:33px;top:242px;font-weight:bold;">〇〇町内会収支報告</div>
<div class="cell" style="left:244px;top:292px;font-weight:bold;">予算額</div>
<div class="cell" style="left:370px;top:292px;font-weight:bold;">実績額</div>
<div class="cell" style="left:33px;top:316px;font-weight:bold;">収入</div>
<div class="cell" style="left:125.8px;top:316px;width:200px;text-align:right;font-weight:bold;letter-spacing:0.8px;transform:scaleY(1.07);transform-origin:0 13px;">192,300</div>
<div class="cell" style="left:251.8px;top:316px;width:200px;text-align:right;font-weight:bold;letter-spacing:0.8px;transform:scaleY(1.07);transform-origin:0 13px;">182,300</div>
<div class="cell" style="left:56px;top:340px;">前年度繰越金</div>
<div class="cell" style="left:126px;top:340px;width:200px;text-align:right;font-size:14.3px;transform:scaleY(1.08);transform-origin:0 13px;">2,300</div>
<div class="cell" style="left:252px;top:340px;width:200px;text-align:right;font-size:14.3px;transform:scaleY(1.08);transform-origin:0 13px;">2,300</div>
<div class="cell" style="left:56px;top:365px;">会費</div>
<div class="cell" style="left:126px;top:365px;width:200px;text-align:right;font-size:14.3px;transform:scaleY(1.08);transform-origin:0 13px;">110,000</div>
<div class="cell" style="left:252px;top:365px;width:200px;text-align:right;font-size:14.3px;transform:scaleY(1.08);transform-origin:0 13px;">100,000</div>
<div class="cell" style="left:56px;top:390px;">助成金</div>
<div class="cell" style="left:126px;top:390px;width:200px;text-align:right;font-size:14.3px;transform:scaleY(1.08);transform-origin:0 13px;">50,000</div>
<div class="cell" style="left:252px;top:390px;width:200px;text-align:right;font-size:14.3px;transform:scaleY(1.08);transform-origin:0 13px;">30,000</div>
<div class="cell" style="left:56px;top:415px;">その他</div>
<div class="cell" style="left:126px;top:415px;width:200px;text-align:right;font-size:14.3px;transform:scaleY(1.08);transform-origin:0 13px;">30,000</div>
<div class="cell" style="left:252px;top:415px;width:200px;text-align:right;font-size:14.3px;transform:scaleY(1.08);transform-origin:0 13px;">50,000</div>
<div class="cell" style="left:33px;top:465px;font-weight:bold;">支出</div>
<div class="cell" style="left:125.8px;top:465px;width:200px;text-align:right;font-weight:bold;letter-spacing:0.8px;transform:scaleY(1.07);transform-origin:0 13px;">205,000</div>
<div class="cell" style="left:251.8px;top:465px;width:200px;text-align:right;font-weight:bold;letter-spacing:0.8px;transform:scaleY(1.07);transform-origin:0 13px;">188,000</div>
<div class="cell" style="left:56px;top:489px;">イベント会場費</div>
<div class="cell" style="left:126px;top:489px;width:200px;text-align:right;font-size:14.3px;transform:scaleY(1.08);transform-origin:0 13px;">50,000</div>
<div class="cell" style="left:252px;top:489px;width:200px;text-align:right;font-size:14.3px;transform:scaleY(1.08);transform-origin:0 13px;">60,000</div>
<div class="cell" style="left:56px;top:514px;">講師講演料</div>
<div class="cell" style="left:126px;top:514px;width:200px;text-align:right;font-size:14.3px;transform:scaleY(1.08);transform-origin:0 13px;">30,000</div>
<div class="cell" style="left:252px;top:514px;width:200px;text-align:right;font-size:14.3px;transform:scaleY(1.08);transform-origin:0 13px;">30,000</div>
<div class="cell" style="left:56px;top:539px;">消耗品購入</div>
<div class="cell" style="left:126px;top:539px;width:200px;text-align:right;font-size:14.3px;transform:scaleY(1.08);transform-origin:0 13px;">25,000</div>
<div class="cell" style="left:252px;top:539px;width:200px;text-align:right;font-size:14.3px;transform:scaleY(1.08);transform-origin:0 13px;">28,000</div>
<div class="cell" style="left:56px;top:564px;">備品購入</div>
<div class="cell" style="left:126px;top:564px;width:200px;text-align:right;font-size:14.3px;transform:scaleY(1.08);transform-origin:0 13px;">50,000</div>
<div class="cell" style="left:252px;top:564px;width:200px;text-align:right;font-size:14.3px;transform:scaleY(1.08);transform-origin:0 13px;">20,000</div>
<div class="cell" style="left:56px;top:589px;">積立金</div>
<div class="cell" style="left:126px;top:589px;width:200px;text-align:right;font-size:14.3px;transform:scaleY(1.08);transform-origin:0 13px;">50,000</div>
<div class="cell" style="left:252px;top:589px;width:200px;text-align:right;font-size:14.3px;transform:scaleY(1.08);transform-origin:0 13px;">50,000</div>
<div class="a" style="left:1262px;top:215px;width:15px;height:15px;background:#fff;border:1px solid #ababab"></div>
<svg style="left:1266px;top:220px" width="7" height="4" viewBox="0 0 7 4"><path d="M0 4h7l-3.5-4z" fill="#666"/></svg>
<div class="a" style="left:1262px;top:230px;width:15px;height:288px;background:#fff;border:1px solid #ababab"></div>
<div class="a" style="left:1262px;top:518px;width:15px;height:97px;background:#dcdcdc"></div>
<div class="a" style="left:1262px;top:615px;width:15px;height:15px;background:#fff;border:1px solid #ababab"></div>
<svg style="left:1266px;top:621px" width="7" height="4" viewBox="0 0 7 4"><path d="M0 0h7l-3.5 4z" fill="#666"/></svg>
<!-- TABBAR -->
<div class="a" style="left:0;top:630px;width:1280px;height:29px;background:#e6e6e6;border-bottom:1px solid #c8c8c8"></div><div class="a" style="left:0;top:630px;width:1259px;height:1px;background:#a0a0a0"></div>
<svg style="left:26px;top:639px" width="6" height="9" viewBox="0 0 6 9"><path d="M6 0v9l-6-4.5z" fill="#c0c0c0"/></svg>
<svg style="left:55px;top:639px" width="6" height="9" viewBox="0 0 6 9"><path d="M0 0v9l6-4.5z" fill="#c0c0c0"/></svg>
<div class="a" style="left:100px;top:630px;width:73px;height:25px;background:#fff;border-left:1px solid #a0a0a0;border-right:1px solid #a0a0a0;border-bottom:2px solid #217346"></div>
<div class="a" style="left:114px;top:636px;font-size:14px;line-height:15px;color:#217346">Sheet1</div>
<svg style="left:205px;top:635px" width="18" height="18" viewBox="0 0 18 18" fill="none" stroke="#666" stroke-width="1.2"><circle cx="9" cy="9" r="7.5"/><path d="M9 5v8M5 9h8" stroke-width="1.6"/></svg>
<svg style="left:768px;top:639px" width="2" height="11" viewBox="0 0 2 11" fill="#b0b0b0"><rect x="0" y="0" width="2" height="2"/><rect x="0" y="4" width="2" height="2"/><rect x="0" y="8" width="2" height="2"/></svg>
<div class="a" style="left:785px;top:637px;width:15px;height:15px;background:#fff;border:1px solid #ababab"></div>
<svg style="left:790px;top:641px" width="4" height="7" viewBox="0 0 4 7"><path d="M4 0v7l-4-3.5z" fill="#666"/></svg>
<div class="a" style="left:799px;top:637px;width:413px;height:15px;background:#fff;border:1px solid #ababab"></div>
<div class="a" style="left:1212px;top:637px;width:32px;height:15px;background:#dcdcdc"></div>
<div class="a" style="left:1244px;top:637px;width:15px;height:15px;background:#fff;border:1px solid #ababab"></div>
<svg style="left:1250px;top:641px" width="4" height="7" viewBox="0 0 4 7"><path d="M0 0v7l4-3.5z" fill="#666"/></svg>
<!-- STATUS -->
<div class="a" style="left:8px;top:661px;font-size:12px;line-height:14px;color:#444">準備完了</div>
<svg style="left:75px;top:662px" width="15" height="14" viewBox="0 0 15 14" fill="none" stroke="#444" stroke-width="1.1"><path d="M1.5 1.5h12v3M1.5 1.5v11h5M1.5 4.5h12"/><circle cx="10.5" cy="9.5" r="3.5"/><circle cx="10.5" cy="9.5" r="1.5" fill="#444"/></svg>
<div class="a" style="left:877px;top:662px;font-size:12px;line-height:14px;color:#444;transform:scaleX(.9);transform-origin:0 0">データの個数: 9</div>
<div class="a" style="left:974px;top:658px;width:40px;height:22px;background:#d2d2d2"></div>
<svg style="left:987px;top:662px" width="14" height="13" viewBox="0 0 14 13" fill="none" stroke="#444" stroke-width="1"><path d="M.5 .5h13v12h-13zM.5 4.5h13M.5 8.5h13M4.5 .5v12M9.5 .5v12"/></svg>
<svg style="left:1027px;top:662px" width="15" height="14" viewBox="0 0 15 14" fill="none" stroke="#444" stroke-width="1"><path d="M.5 .5h14v13h-14zM3.5 3h8v8h-8zM5.5 5.5h4M5.5 7.5h4"/></svg>
<svg style="left:1066px;top:662px" width="16" height="14" viewBox="0 0 16 14" fill="none" stroke="#444" stroke-width="1"><path d="M.5 .5h15v13h-15zM5.5 .5v7h5v-7M.5 10.5h15"/></svg>
<svg style="left:1099px;top:668px" width="10" height="2" viewBox="0 0 10 2"><path d="M0 1.5h9" stroke="#444" stroke-width="1"/></svg>
<div class="a" style="left:1113px;top:669px;width:99px;height:1px;background:#a0a0a0"></div>
<div class="a" style="left:1161px;top:664px;width:5px;height:11px;background:#777"></div>
<svg style="left:1217px;top:664px" width="10" height="10" viewBox="0 0 10 10"><path d="M0 5.5h9M4.5 1v9" stroke="#444" stroke-width="1"/></svg>
<div class="a" style="left:1239px;top:661px;font-size:13px;line-height:15px;color:#444">100%</div>
</body></html>
